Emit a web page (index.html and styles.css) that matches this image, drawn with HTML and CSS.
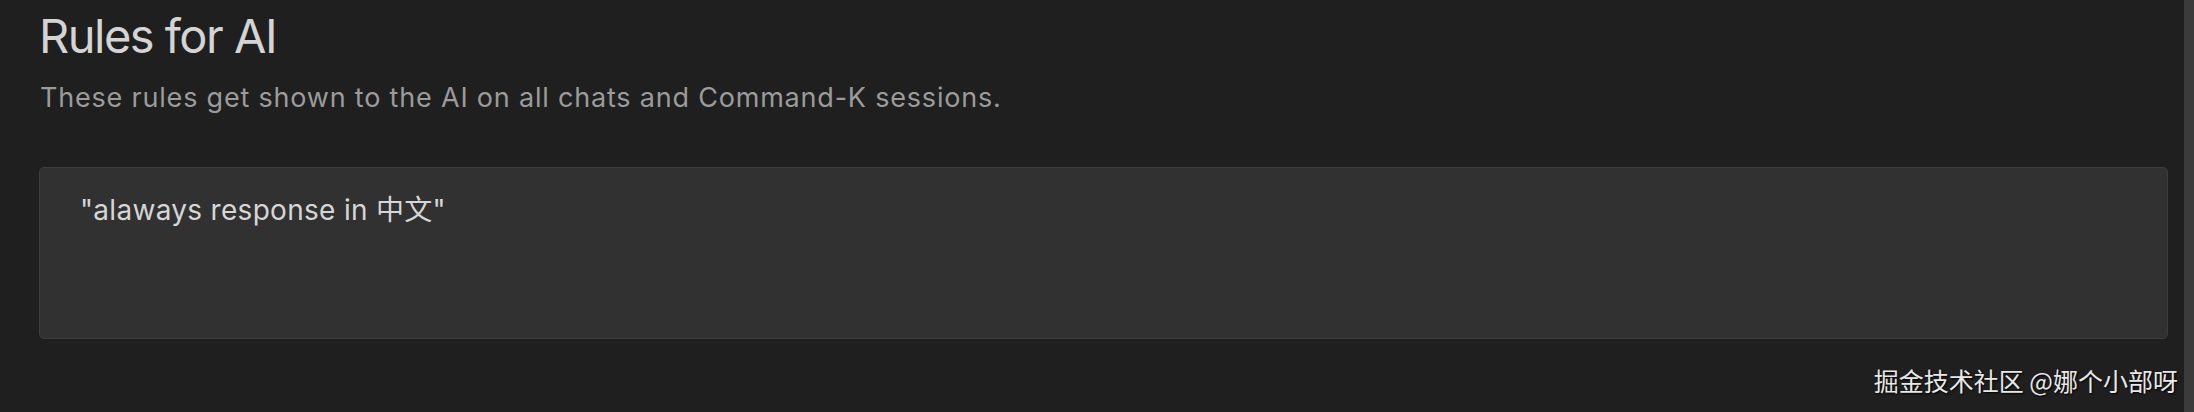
FILE: index.html
```html
<!DOCTYPE html>
<html lang="en">
<head>
<meta charset="utf-8">
<title>Rules for AI</title>
<link rel="stylesheet" href="styles.css">
</head>
<body>
<div class="page">
  <main class="content">
    <h1 class="title">Rules for AI</h1>
    <p class="subtitle">These rules get shown to the AI on all chats and Command-K sessions.</p>
    <div class="rules-box">
      <div class="rules-text">"alaways response in 中文"</div>
    </div>
  </main>
  <div class="scrollbar"></div>
  <div class="watermark">掘金技术社区 @娜个小部呀</div>
</div>
</body>
</html>
```
FILE: styles.css
```css
html, body {
  margin: 0;
  padding: 0;
  background: #1f1f1f;
}
.page {
  position: relative;
  display: flex;
  height: 412px;
  overflow: hidden;
  font-family: Inter, "Liberation Sans", "Noto Sans CJK SC", sans-serif;
}
.content {
  flex: 1;
  padding: 0 16px 0 39px;
  display: flex;
  flex-direction: column;
}
.title {
  margin: 8px 0 0 0;
  font-size: 47px;
  line-height: 56px;
  font-weight: 400;
  letter-spacing: -1.5px;
  color: #d4d4d4;
}
.subtitle {
  margin: 18px 0 0 1px;
  font-size: 27px;
  line-height: 32px;
  letter-spacing: 0.8px;
  color: #9b9b9b;
}
.rules-box {
  box-sizing: border-box;
  margin-top: 53px;
  height: 172px;
  background: #313131;
  border: 1px solid #3d3d3d;
  border-radius: 5px;
  padding: 25px 40px;
}
.rules-text {
  font-size: 28px;
  line-height: 34px;
  letter-spacing: 0.3px;
  color: #d6d6d6;
}
.scrollbar {
  width: 10px;
  background: #3b3b3b;
}
.watermark {
  position: absolute;
  right: 16px;
  bottom: 17px;
  font-family: "Noto Sans CJK SC", sans-serif;
  font-size: 25px;
  line-height: 30px;
  color: #e8e8e8;
  text-shadow: 1px 1px 2px #000;
}
```
